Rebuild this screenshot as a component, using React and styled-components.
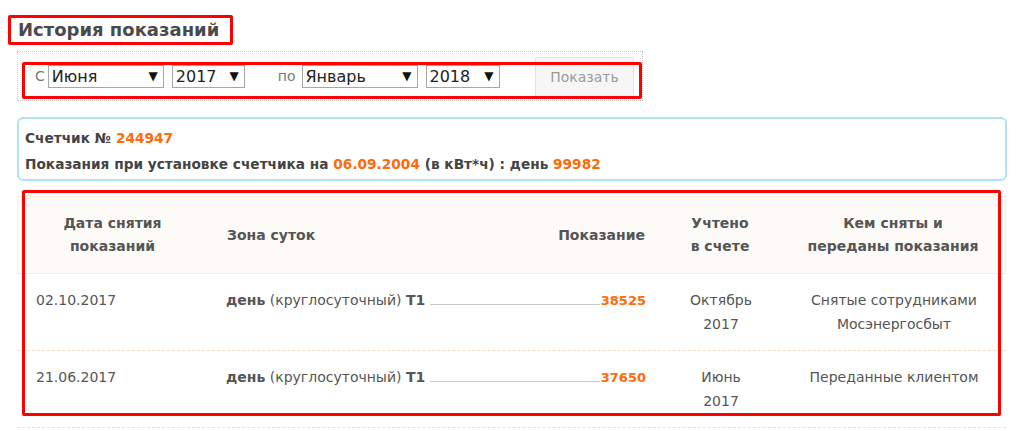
import React from 'react';
import styled, { createGlobalStyle } from 'styled-components';

const GlobalStyle = createGlobalStyle`
    body {
        margin: 0;
        background: #fff;
        font-family: "DejaVu Sans", Verdana, sans-serif;
        color: #555;
    }
`;

const Page = styled.div`
    position: relative;
    width: 1024px;
    height: 431px;
    overflow: hidden;
    padding: 17px 0 0 17px;
    box-sizing: border-box;
`;

const Title = styled.h2`
    margin: 0 0 0 1px;
    font-size: 18px;
    line-height: 26px;
    font-weight: bold;
    color: #4a4a4a;
`;

const Filter = styled.div`
    margin-top: 8px;
    width: 626px;
    height: 50px;
    box-sizing: border-box;
    border: 1px dotted #c8c8c8;
    display: flex;
    align-items: center;
    padding: 0 8px 0 17px;
`;

const Label = styled.span`
    font-size: 14px;
    color: #777;
    margin-right: ${p => p.$gap || 3}px;
    margin-left: ${p => p.$left || 0}px;
`;

const Select = styled.div`
    width: ${p => p.$w}px;
    height: 23px;
    box-sizing: border-box;
    border: 1px solid #a6a6a6;
    background: #fff;
    display: flex;
    align-items: center;
    justify-content: space-between;
    padding: 0 5px 0 3px;
    margin-right: 8px;
    font-size: 16px;
    color: #222;
`;

const Arrow = styled.span`
    font-size: 12px;
    color: #111;
`;

const Button = styled.button`
    margin-left: auto;
    width: 99px;
    height: 40px;
    margin-top: 2px;
    background: #f6f6f6;
    border: 1px solid #e2e2e2;
    border-radius: 2px;
    font-family: "DejaVu Sans", Verdana, sans-serif;
    font-size: 14px;
    color: #9a9a9a;
`;

const Info = styled.div`
    margin-top: 16px;
    width: 990px;
    height: 64px;
    box-sizing: border-box;
    border: 2px solid #ade3f4;
    border-radius: 6px;
    padding: 6px 0 0 6px;
    font-size: 13.7px;
    font-weight: bold;
    line-height: 26px;
    color: #444;
`;

const Orange = styled.span`
    color: #ff6a0a;
`;

const Table = styled.div`
    margin-top: 15px;
    width: 989px;
`;

const Row = styled.div`
    display: grid;
    grid-template-columns: 189px 1fr 122px 224px;
    box-sizing: border-box;
    height: ${p => p.$h}px;
    align-items: ${p => (p.$head ? 'center' : 'start')};
    padding-top: ${p => (p.$head ? 0 : 14)}px;
    font-size: 14px;
    line-height: 24px;
    ${p =>
        p.$head
            ? `background: #fdfbf8; border: 1px solid #fbebdc; font-weight: bold; line-height: 23px;`
            : `border-bottom: 1px dashed #fbdcbc;`}
`;

const Cell = styled.div`
    text-align: ${p => p.$align || 'left'};
    padding: ${p => p.$pad || '0'};
`;

const ZoneCell = styled.div`
    display: flex;
    align-items: baseline;
    padding: 0 14px 0 20px;
`;

const Leader = styled.span`
    flex: 1;
    border-bottom: 1px solid #c9c9c9;
    margin: 0 1px 0 5px;
`;

const Value = styled.span`
    color: #ff6a0a;
    font-weight: bold;
    font-size: 13px;
`;

const Mark = styled.div`
    position: absolute;
    left: ${p => p.$x}px;
    top: ${p => p.$y}px;
    width: ${p => p.$w}px;
    height: ${p => p.$h}px;
    box-sizing: border-box;
    border: 3px solid #ff0000;
    border-radius: 2px;
    pointer-events: none;
`;

const rows = [
    { date: '02.10.2017', value: '38525', month: 'Октябрь', by: ['Снятые сотрудниками', 'Мосэнергосбыт'] },
    { date: '21.06.2017', value: '37650', month: 'Июнь', by: ['Переданные клиентом'] },
];

const App = () => (
    <Page>
        <GlobalStyle />
        <Title>История показаний</Title>
        <Filter>
            <Label>С</Label>
            <Select $w={116}>Июня<Arrow>▼</Arrow></Select>
            <Select $w={73}>2017<Arrow>▼</Arrow></Select>
            <Label $left={25} $gap={6}>по</Label>
            <Select $w={116}>Январь<Arrow>▼</Arrow></Select>
            <Select $w={74}>2018<Arrow>▼</Arrow></Select>
            <Button>Показать</Button>
        </Filter>
        <Info>
            <div>Счетчик № <Orange>244947</Orange></div>
            <div>
                Показания при установке счетчика на <Orange>06.09.2004</Orange> (в кВт*ч) : день <Orange>99982</Orange>
            </div>
        </Info>
        <Table>
            <Row $head $h={78}>
                <Cell $align="center">Дата снятия<br />показаний</Cell>
                <ZoneCell>
                    <span>Зона суток</span>
                    <span style={{ flex: 1 }} />
                    <span>Показание</span>
                </ZoneCell>
                <Cell $align="center">Учтено<br />в счете</Cell>
                <Cell $align="center">Кем сняты и<br />переданы показания</Cell>
            </Row>
            {rows.map(r => (
                <Row key={r.date} $h={77}>
                    <Cell $pad="0 0 0 19px">{r.date}</Cell>
                    <ZoneCell>
                        <span><b>день</b> (круглосуточный) <b>Т1</b></span>
                        <Leader />
                        <Value>{r.value}</Value>
                    </ZoneCell>
                    <Cell $align="center">{r.month}<br />2017</Cell>
                    <Cell $align="center">{r.by[0]}{r.by[1] && <><br />{r.by[1]}</>}</Cell>
                </Row>
            ))}
        </Table>
        <Mark $x={8} $y={15} $w={225} $h={30} />
        <Mark $x={22} $y={62} $w={620} $h={37} />
        <Mark $x={22} $y={190} $w={979} $h={226} />
    </Page>
);

export default App;
